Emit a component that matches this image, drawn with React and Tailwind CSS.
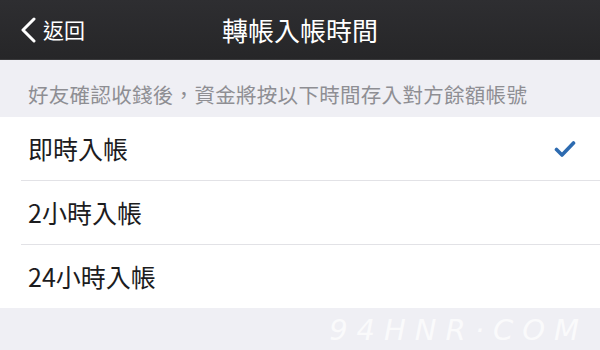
import React from 'react';

const font = { fontFamily: '"Noto Sans CJK TC", "Noto Sans", sans-serif' };

const options = [
  { label: '即時入帳', selected: true },
  { label: '2小時入帳' },
  { label: '24小時入帳' },
];

export default function App() {
  return (
    <div className="relative w-[600px] h-[350px] overflow-hidden bg-[#efeff4]" style={font}>
      {/* Nav bar */}
      <div className="relative h-[60px] flex items-center bg-gradient-to-b from-[#2e2e31] to-[#262628] border-b border-[#3a3a3c]">
        <button className="flex items-center gap-[6px] pl-[19px] text-white">
          <svg className="w-[18px] h-[26px]" viewBox="0 0 18 26" fill="none" stroke="currentColor">
            <path d="M15 2L4 13l11 11" strokeWidth={3} strokeLinecap="round" strokeLinejoin="round" />
          </svg>
          <span className="text-[21px] leading-none">返回</span>
        </button>
        <h1 className="absolute left-0 right-0 text-center text-[26px] leading-none text-white pointer-events-none">
          轉帳入帳時間
        </h1>
      </div>

      {/* Hint */}
      <p className="h-[57px] pt-[24px] pl-[28px] text-[20.5px] leading-none text-[#8e8e93] tracking-[0.3px]">
        好友確認收錢後，資金將按以下時間存入對方餘額帳號
      </p>

      {/* Options */}
      <div className="bg-white">
        {options.map((o, i) => (
          <div key={o.label} className={`flex pl-[21px] ${i < options.length - 1 ? 'h-[64px]' : 'h-[63px]'}`}>
            <div
              className={`flex-1 flex items-center pr-[24px] ${
                i < options.length - 1 ? 'border-b border-[#e2e2e6]' : ''
              }`}
            >
              <span className="flex-1 pl-[7px] text-[25px] leading-none text-[#1c1c1e]">{o.label}</span>
              {o.selected && (
                <svg className="w-[22px] h-[18px]" viewBox="0 0 22 18" fill="none" stroke="#2d6bb0">
                  <path d="M2.5 9.5l5.5 5.5L19.5 3" strokeWidth={3.6} strokeLinecap="round" strokeLinejoin="round" />
                </svg>
              )}
            </div>
          </div>
        ))}
      </div>

      {/* Watermark */}
      <span
        className="absolute right-[12px] bottom-[5px] text-[29px] italic tracking-[9px] text-white/70 leading-none"
        style={{ fontFamily: '"DejaVu Sans", sans-serif', fontWeight: 300 }}
      >
        94HNR·COM
      </span>
    </div>
  );
}
